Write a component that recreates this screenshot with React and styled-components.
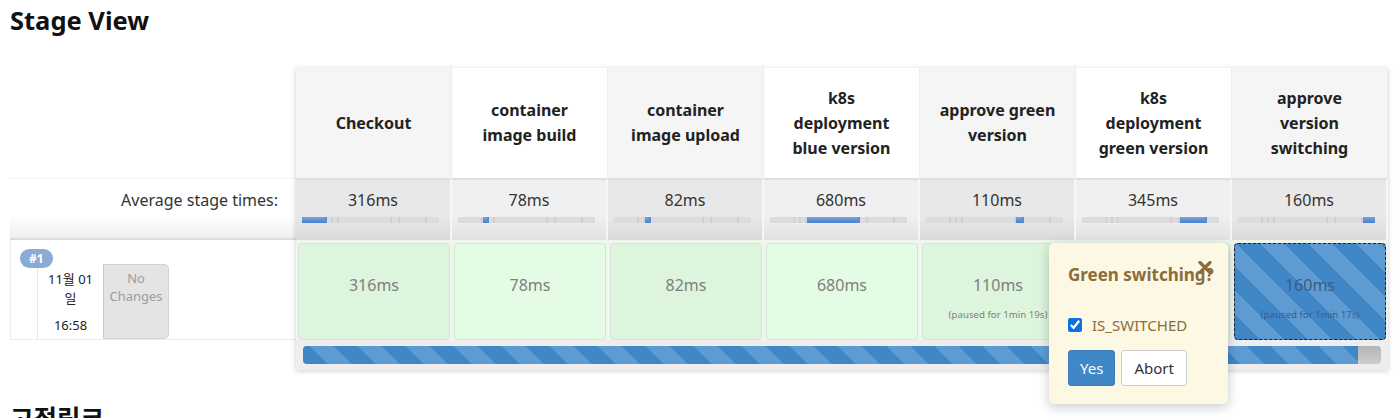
import React from "react";
import styled, { createGlobalStyle } from "styled-components";

const GlobalStyle = createGlobalStyle`
  html, body {
    margin: 0;
    overflow: hidden;
    background: #fff;
  }
  body {
    font-family: "Noto Sans", "Noto Sans CJK KR", sans-serif;
    color: #333;
  }
`;

const stages = [
  { name: ["Checkout"], avg: "316ms" },
  { name: ["container", "image build"], avg: "78ms" },
  { name: ["container", "image upload"], avg: "82ms" },
  { name: ["k8s", "deployment", "blue version"], avg: "680ms" },
  { name: ["approve green", "version"], avg: "110ms", paused: "(paused for 1min 19s)" },
  { name: ["k8s", "deployment", "green version"], avg: "345ms" },
  { name: ["approve", "version", "switching"], avg: "160ms", paused: "(paused for 1min 17s)", pending: true },
];

// share of each stage in the average time bar (px of a 137px bar)
const segments = [25, 6, 6, 53, 8, 27, 12];

const stripes = (dark, light) => `repeating-linear-gradient(
  45deg,
  ${dark} 0px,
  ${dark} 17px,
  ${light} 17px,
  ${light} 34px
)`;

const Page = styled.div`
  padding: 0 10px;
`;

const Title = styled.h2`
  margin: 3px 0 30px;
  font-size: 25.5px;
  line-height: 35px;
  font-weight: 700;
  color: #111;
`;

const SubTitle = styled(Title)`
  margin-top: 31px;
`;

const Table = styled.div`
  display: flex;
  align-items: flex-start;
`;

const LeftCol = styled.div`
  flex: 0 0 286px;
  width: 286px;
  padding-top: 110px;
  display: flex;
  flex-direction: column;
`;

const AvgLabel = styled.div`
  height: 62px;
  box-sizing: border-box;
  padding: 10px 18px 0 0;
  text-align: right;
  font-size: 16px;
  line-height: 22px;
  color: #333;
  border-top: 1px solid #f3f3f3;
  border-bottom: 2px solid #dcdcdc;
  background: linear-gradient(to bottom, #fff 62%, #efefef);
`;

const BuildRow = styled.div`
  position: relative;
  height: 100px;
  box-sizing: border-box;
  display: flex;
  padding: 24px 0 0 26px;
  border-left: 1px solid #ececec;
  border-bottom: 1px solid #ececec;
  background: #fff;
`;

const Badge = styled.span`
  position: absolute;
  left: 9px;
  top: 9px;
  height: 19px;
  padding: 0 9px;
  border-radius: 10px;
  background: #88acd6;
  color: #fff;
  font-size: 12px;
  font-weight: 700;
  line-height: 19px;
`;

const DateBox = styled.div`
  width: 66px;
  height: 75px;
  box-sizing: border-box;
  padding-top: 6px;
  border-left: 1px solid #e6e6e6;
  background: #fff;
  text-align: center;
  font-size: 13px;
  line-height: 19px;
  color: #222;
`;

const TimeOfDay = styled.div`
  margin-top: 8px;
`;

const NoChanges = styled.div`
  width: 66px;
  height: 75px;
  box-sizing: border-box;
  padding-top: 4px;
  border: 1px solid #d2d2d2;
  border-left-color: #c8c8c8;
  border-radius: 0 5px 5px 0;
  background: #e4e4e4;
  text-align: center;
  font-size: 13px;
  line-height: 18px;
  color: #9c9c9c;
`;

const Stages = styled.div`
  position: relative;
  flex: 0 0 1092px;
  background: #fff;
  box-shadow: 0 1px 5px rgba(0, 0, 0, 0.2);
`;

const StageGrid = styled.div`
  display: grid;
  grid-template-columns: repeat(7, 156px);
  grid-template-rows: 110px 62px 100px;
`;

const HeadCell = styled.div`
  display: flex;
  align-items: center;
  justify-content: center;
  text-align: center;
  box-sizing: border-box;
  padding: 0 8px;
  border-right: 1px solid #ececec;
  background: ${(p) => (p.$odd ? "#fff" : "#f5f5f5")};
  font-size: 16px;
  line-height: 25px;
  font-weight: 700;
  color: #222;
`;

const TimeCell = styled.div`
  box-sizing: border-box;
  padding-top: 9px;
  border-top: 2px solid #dedede;
  border-right: 2px solid #f6f6f6;
  background: ${(p) => (p.$odd ? "#f0f0f0" : "#e8e8e8")};
  background-image: linear-gradient(to bottom, rgba(0, 0, 0, 0) 60%, rgba(0, 0, 0, 0.06));
  text-align: center;
  font-size: 16px;
  line-height: 22px;
  color: #333;
`;

const Bar = styled.div`
  display: flex;
  width: 137px;
  height: 6px;
  margin: 6px 0 0 6px;
`;

const Seg = styled.div`
  width: ${(p) => p.$w}px;
  height: 6px;
  box-sizing: border-box;
  background: ${(p) => (p.$on ? "linear-gradient(#76a5e2, #4a7fcb)" : "#dcdcdc")};
  border-right: 2px solid ${(p) => (p.$on ? "#5a8cd2" : "#d0d0d0")};
  &:last-child {
    border-right: none;
  }
`;

const BuildSlot = styled.div`
  box-sizing: border-box;
  padding: 3px 2px 0;
  background: #edf5ed;
`;

const BuildCell = styled.div`
  height: 100%;
  box-sizing: border-box;
  padding-top: 30px;
  border-radius: 4px;
  border: 1px ${(p) => (p.$pending ? "dashed #222" : "solid #d8e3d8")};
  background: ${(p) =>
    p.$pending ? stripes("#3f87c7", "#5f9bd3") : p.$odd ? "#e3fce3" : "#dcf5dc"};
  text-align: center;
  color: ${(p) => (p.$pending ? "#3a5d83" : "#7f7f7f")};
`;

const CellTime = styled.div`
  font-size: 16px;
  line-height: 22px;
`;

const Paused = styled.div`
  margin-top: 13px;
  font-size: 9.7px;
  line-height: 12px;
`;

const ProgressRow = styled.div`
  padding: 6px 7px;
  background: #eee;
`;

const Track = styled.div`
  height: 18px;
  border-radius: 4px;
  overflow: hidden;
  background: linear-gradient(to bottom, #b3b3b3, #cfcfcf);
`;

const Fill = styled.div`
  height: 100%;
  background: ${stripes("#3f87c7", "#5f9bd3")};
`;

const Popover = styled.div`
  position: absolute;
  left: 753px;
  top: 175px;
  width: 179px;
  box-sizing: border-box;
  padding: 21px 19px 18px;
  border-radius: 5px;
  background: #fcf8e4;
  box-shadow: 0 3px 12px rgba(0, 0, 0, 0.22);
  color: #8a6d3b;
`;

const PopTitle = styled.div`
  font-size: 17px;
  line-height: 22px;
  font-weight: 700;
  white-space: nowrap;
`;

const Close = styled.svg`
  position: absolute;
  right: 16px;
  top: 18px;
`;

const CheckRow = styled.label`
  display: flex;
  align-items: center;
  height: 20px;
  margin-top: 29px;
  font-size: 15px;
`;

const Check = styled.input`
  width: 14px;
  height: 14px;
  margin: 0 10px 0 0;
  accent-color: #0b6fe8;
`;

const Buttons = styled.div`
  display: flex;
  gap: 6px;
  margin-top: 15px;
`;

const Button = styled.button`
  height: 36px;
  padding: 0 ${(p) => (p.$primary ? 11 : 12)}px;
  border-radius: 3px;
  border: 1px solid ${(p) => (p.$primary ? "#3a7fbb" : "#ccc")};
  background: ${(p) => (p.$primary ? "#3f87c6" : "#fff")};
  color: ${(p) => (p.$primary ? "#fff" : "#333")};
  font-family: inherit;
  font-size: 15px;
`;

function App() {
  return (
    <Page>
      <GlobalStyle />
      <Title>Stage View</Title>
      <Table>
        <LeftCol>
          <AvgLabel>Average stage times:</AvgLabel>
          <BuildRow>
            <Badge>#1</Badge>
            <DateBox>
              11월 01<br />일
              <TimeOfDay>16:58</TimeOfDay>
            </DateBox>
            <NoChanges>
              No<br />Changes
            </NoChanges>
          </BuildRow>
        </LeftCol>
        <Stages>
          <StageGrid>
            {stages.map((s, i) => (
              <HeadCell key={"h" + i} $odd={i % 2 === 1}>
                <div>
                  {s.name.map((line, j) => (
                    <div key={j}>{line}</div>
                  ))}
                </div>
              </HeadCell>
            ))}
            {stages.map((s, i) => (
              <TimeCell key={"t" + i} $odd={i % 2 === 1}>
                {s.avg}
                <Bar>
                  {segments.map((w, j) => (
                    <Seg key={j} $w={w} $on={j === i} />
                  ))}
                </Bar>
              </TimeCell>
            ))}
            {stages.map((s, i) => (
              <BuildSlot key={"b" + i}>
                <BuildCell $odd={i % 2 === 1} $pending={s.pending}>
                  <CellTime>{s.avg}</CellTime>
                  {s.paused && <Paused>{s.paused}</Paused>}
                </BuildCell>
              </BuildSlot>
            ))}
          </StageGrid>
          <ProgressRow>
            <Track>
              <Fill style={{ width: "97.9%" }} />
            </Track>
          </ProgressRow>
          <Popover>
            <Close width="14" height="13" viewBox="0 0 14 13">
              <path d="M2 1.5 L12 11.5 M12 1.5 L2 11.5" stroke="#8a6d3b" strokeWidth="3.2" strokeLinecap="round" />
            </Close>
            <PopTitle>Green switching?</PopTitle>
            <CheckRow>
              <Check type="checkbox" checked readOnly />
              IS_SWITCHED
            </CheckRow>
            <Buttons>
              <Button $primary>Yes</Button>
              <Button>Abort</Button>
            </Buttons>
          </Popover>
        </Stages>
      </Table>
      <SubTitle>고정링크</SubTitle>
    </Page>
  );
}

export default App;
